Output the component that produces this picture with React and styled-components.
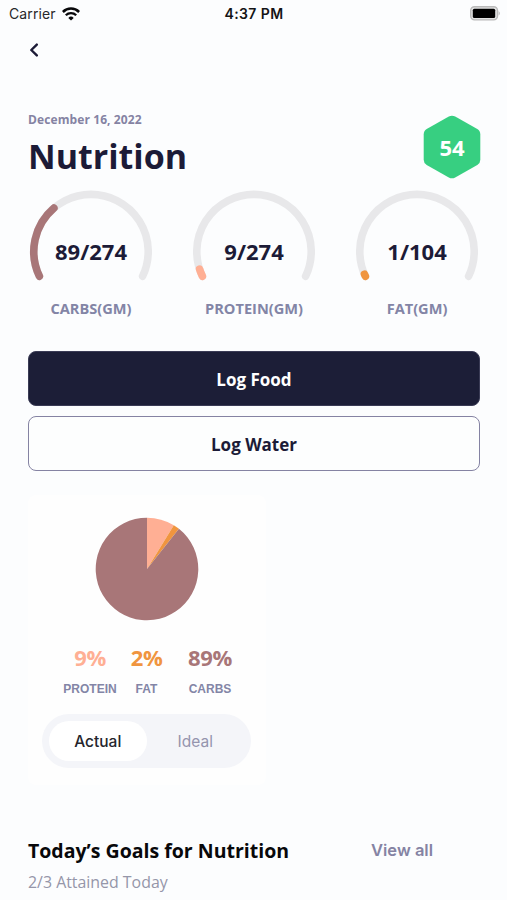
import React from 'react'
import styled, { createGlobalStyle } from 'styled-components'

const macros = [
  { id: 'carbs', label: 'CARBS(GM)', value: 89, goal: 274, color: '#a87678' },
  { id: 'protein', label: 'PROTEIN(GM)', value: 9, goal: 274, color: '#ffaf94' },
  { id: 'fat', label: 'FAT(GM)', value: 1, goal: 104, color: '#f0953f' },
]

const split = [
  { id: 'protein', label: 'PROTEIN', percent: 9, color: '#ffaf94', width: 64 },
  { id: 'fat', label: 'FAT', percent: 2, color: '#f0953f', width: 49 },
  { id: 'carbs', label: 'CARBS', percent: 89, color: '#a87678', width: 78 },
]

const GAUGE_SWEEP = 231
const GAUGE_START = 154.5

function polar(cx, cy, r, deg) {
  const rad = (deg * Math.PI) / 180
  return `${cx + r * Math.cos(rad)} ${cy + r * Math.sin(rad)}`
}

function arc(cx, cy, r, from, to) {
  const large = to - from > 180 ? 1 : 0
  return `M${polar(cx, cy, r, from)} A${r} ${r} 0 ${large} 1 ${polar(cx, cy, r, to)}`
}

function Gauge(props) {
  const { value, goal, color, label } = props
  const end = GAUGE_START + GAUGE_SWEEP * (value / goal)

  return (
    <GaugeBox>
      <svg width="124" height="92" viewBox="0 0 124 92" fill="none" strokeWidth="7.6" strokeLinecap="round">
        <path d={arc(62, 61.6, 57.2, GAUGE_START, GAUGE_START + GAUGE_SWEEP)} stroke="#e8e8ea" />
        <path d={arc(62, 61.6, 57.2, GAUGE_START, end)} stroke={color} />
      </svg>
      <GaugeValue>
        {value}/{goal}
      </GaugeValue>
      <GaugeLabel>{label}</GaugeLabel>
    </GaugeBox>
  )
}

function Pie() {
  const slices = [
    { color: '#ffaf94', from: -90, to: -58.5 },
    { color: '#f0953f', from: -58.5, to: -51.5 },
    { color: '#a87678', from: -51.5, to: 270 },
  ]

  return (
    <svg width="104" height="104" viewBox="0 0 104 104">
      {slices.map(slice => (
        <path
          key={slice.color}
          d={`${arc(52, 52, 51.3, slice.from, slice.to)} L52 52 Z`}
          fill={slice.color}
        />
      ))}
    </svg>
  )
}

function WifiIcon() {
  return (
    <svg width="18" height="14" viewBox="0 0 18 14" fill="none" stroke="#08080a">
      <path d="M0.9 5 A11.4 11.4 0 0 1 17.1 5" strokeWidth="2.5" />
      <path d="M3.8 8.2 A7.4 7.4 0 0 1 14.2 8.2" strokeWidth="2.3" />
      <path d="M9 13.6 L6.3 10.9 A3.8 3.8 0 0 1 11.7 10.9 Z" fill="#08080a" stroke="none" />
    </svg>
  )
}

function BatteryIcon() {
  return (
    <svg width="31" height="15" viewBox="0 0 31 15">
      <rect x="0.7" y="0.7" width="26.8" height="13.2" rx="3.8" fill="#e4e4e4" stroke="#bababa" strokeWidth="1.4" />
      <rect x="2.8" y="2.7" width="22.4" height="9.2" rx="1.5" fill="#000" />
      <path d="M28.7 5 Q30.8 7.3 28.7 9.6 Z" fill="#b0b0b0" />
    </svg>
  )
}

export default function App() {
  return (
    <Screen>
      <GlobalStyle />
      <StatusBar>
        <Carrier>
          <span>Carrier</span>
          <WifiIcon />
        </Carrier>
        <Clock>4:37 PM</Clock>
        <Battery>
          <BatteryIcon />
        </Battery>
      </StatusBar>
      <NavBar>
        <BackButton aria-label="Back">
          <svg width="10" height="14" viewBox="0 0 10 14" fill="none" stroke="#1c1b37" strokeWidth="2.4">
            <path d="M7.8 1.6 L2.3 7 L7.8 12.4" strokeLinejoin="round" strokeLinecap="round" />
          </svg>
        </BackButton>
      </NavBar>
      <Header>
        <div>
          <DateText>December 16, 2022</DateText>
          <Title>Nutrition</Title>
        </div>
        <Score>
          <svg width="58" height="64" viewBox="0 0 58 64">
            <path
              d="M25.8 1.5 Q29 -0.2 32.2 1.5 L54.3 14 Q57.3 15.9 57.3 19.3 V44.7 Q57.3 48.1 54.3 50 L32.2 62.5 Q29 64.2 25.8 62.5 L3.7 50 Q0.7 48.1 0.7 44.7 V19.3 Q0.7 15.9 3.7 14 Z"
              fill="#37cf81"
            />
          </svg>
          <ScoreValue>54</ScoreValue>
        </Score>
      </Header>
      <Gauges>
        {macros.map(macro => (
          <Gauge key={macro.id} {...macro} />
        ))}
      </Gauges>
      <Actions>
        <Button $primary>Log Food</Button>
        <Button>Log Water</Button>
      </Actions>
      <Card>
        <Pie />
        <Split>
          {split.map(item => (
            <SplitItem key={item.id} $width={item.width}>
              <Percent $color={item.color}>{item.percent}%</Percent>
              <SplitLabel>{item.label}</SplitLabel>
            </SplitItem>
          ))}
        </Split>
        <Toggle>
          <ToggleOption $active>Actual</ToggleOption>
          <ToggleOption>Ideal</ToggleOption>
        </Toggle>
      </Card>
      <GoalsHeader>
        <GoalsTitle>Today’s Goals for Nutrition</GoalsTitle>
        <ViewAll>View all</ViewAll>
      </GoalsHeader>
      <Attained>2/3 Attained Today</Attained>
    </Screen>
  )
}

const GlobalStyle = createGlobalStyle`
  * {
    box-sizing: border-box;
  }
  body {
    margin: 0;
    background: #fcfdfe;
    font-family: 'Open Sans', sans-serif;
  }
  svg {
    display: block;
  }
  button {
    font-family: inherit;
    padding: 0;
    border: none;
    background: none;
  }
`

const Screen = styled.div`
  width: 507px;
  height: 900px;
  padding: 0 27px 0 28px;
  overflow: hidden;
  background: #fcfdfe;
`
const StatusBar = styled.div`
  display: grid;
  grid-template-columns: 1fr auto 1fr;
  align-items: center;
  height: 27px;
  margin: 0 -21px 0 -19px;
  font-family: Inter, sans-serif;
  font-size: 14px;
  color: #28282a;
`
const Carrier = styled.div`
  display: flex;
  align-items: center;
  gap: 6px;
  letter-spacing: 0.1px;
`
const Clock = styled.div`
  padding-right: 2px;
  font-weight: 600;
  letter-spacing: 0.4px;
  color: #141416;
`
const Battery = styled.div`
  display: flex;
  justify-content: flex-end;
`
const NavBar = styled.div`
  display: flex;
  align-items: center;
  height: 45px;
`
const BackButton = styled.button`
  width: 12px;
  margin-left: 1px;
`
const Header = styled.div`
  display: flex;
  justify-content: space-between;
  height: 118px;
  margin-right: -1px;
  padding-top: 39px;
`
const DateText = styled.div`
  padding-top: 1px;
  font-size: 12px;
  font-weight: 700;
  line-height: 16px;
  letter-spacing: 0.1px;
  color: #8583a3;
`
const Title = styled.h1`
  margin: 5px 0 0;
  font-size: 34px;
  font-weight: 700;
  line-height: 46px;
  color: #1c1b37;
`
const Score = styled.div`
  display: grid;
  place-items: center;
  align-self: flex-start;
  margin-top: 4px;

  > * {
    grid-area: 1 / 1;
  }
`
const ScoreValue = styled.div`
  font-size: 22px;
  font-weight: 700;
  line-height: 28px;
  color: #fff;
`
const Gauges = styled.div`
  display: flex;
  justify-content: space-between;
  height: 161px;
  margin: 0 1px;
`
const GaugeBox = styled.div`
  display: flex;
  flex-direction: column;
  align-items: center;
  width: 124px;
`
const GaugeValue = styled.div`
  margin-top: -46px;
  font-size: 22px;
  font-weight: 700;
  line-height: 30px;
  color: #1c1b37;
`
const GaugeLabel = styled.div`
  margin-top: 32px;
  font-size: 14.6px;
  font-weight: 700;
  line-height: 20px;
  color: #8385a6;
`
const Actions = styled.div`
  display: flex;
  flex-direction: column;
  gap: 10px;
`
const Button = styled.button`
  height: 55px;
  padding-top: 2px;
  border: 1px solid ${props => (props.$primary ? '#3a3b55' : '#8583a3')};
  border-radius: 8px;
  background: ${props => (props.$primary ? '#1c1e37' : '#fdfefe')};
  color: ${props => (props.$primary ? '#fff' : '#1c1b37')};
  font-size: 17px;
  font-weight: 700;
`
const Card = styled.div`
  display: flex;
  flex-direction: column;
  align-items: center;
  width: 238px;
  height: 290px;
  margin-top: 24px;
  padding-top: 22px;
  border-radius: 8px;
  background: #fefefe;
`
const Split = styled.div`
  display: flex;
  margin: 21px 0 0 13px;
`
const SplitItem = styled.div`
  display: flex;
  flex-direction: column;
  align-items: center;
  width: ${props => props.$width}px;
`
const Percent = styled.div`
  font-size: 22px;
  font-weight: 700;
  line-height: 30px;
  letter-spacing: -0.4px;
  color: ${props => props.$color};
`
const SplitLabel = styled.div`
  margin-top: 9px;
  font-family: 'Liberation Sans', sans-serif;
  font-size: 12px;
  font-weight: 700;
  line-height: 16px;
  color: #8385a6;
`
const Toggle = styled.div`
  display: flex;
  width: 209px;
  height: 54px;
  margin: 17px 1px 0 0;
  padding: 7px;
  border-radius: 27px;
  background: #f4f5f9;
`
const ToggleOption = styled.button`
  width: 98px;
  height: 40px;
  border-radius: 20px;
  background: ${props => (props.$active ? '#fff' : 'transparent')};
  color: ${props => (props.$active ? '#25252d' : '#9594ae')};
  font-family: Inter, sans-serif;
  font-size: 15.5px;
  font-weight: ${props => (props.$active ? 500 : 400)};
`
const GoalsHeader = styled.div`
  display: flex;
  justify-content: space-between;
  align-items: center;
  height: 28px;
  margin-top: 51px;
  padding-right: 47px;
`
const GoalsTitle = styled.h2`
  margin: 0;
  font-size: 19.5px;
  font-weight: 700;
  color: #08080a;
`
const ViewAll = styled.div`
  font-family: Inter, sans-serif;
  font-size: 16.5px;
  font-weight: 600;
  color: #8583a3;
`
const Attained = styled.div`
  margin-top: 7px;
  font-size: 15.9px;
  line-height: 22px;
  color: #9596a9;
`
